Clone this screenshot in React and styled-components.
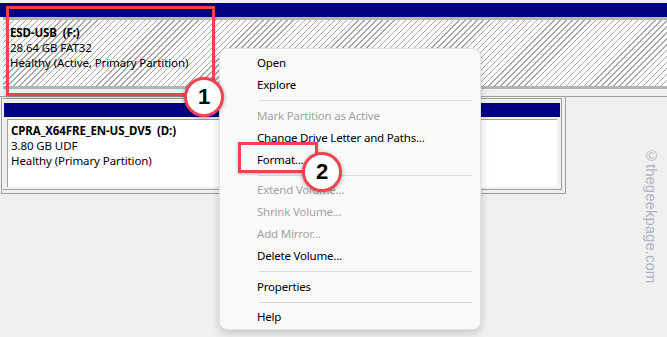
import styled, { createGlobalStyle } from "styled-components";

const GlobalStyle = createGlobalStyle`
  html, body {
    margin: 0;
    padding: 0;
    background: #f0f0f0;
  }
  body {
    font-family: "Noto Sans", "Liberation Sans", sans-serif;
    font-size: 11.5px;
    color: #000;
  }
`;

const Screen = styled.div`
  position: relative;
  width: 667px;
  height: 337px;
  overflow: hidden;
  background: #f0f0f0;
  padding-top: 3px;
  box-sizing: border-box;
  display: flex;
  flex-direction: column;
`;

const TitleBar = styled.div`
  height: 14px;
  flex: none;
  background: #000080;
`;

const HatchedBody = styled.div`
  height: 72px;
  flex: none;
  box-sizing: border-box;
  border-top: 3px solid #b4b4b4;
  border-bottom: 3px solid #b4b4b4;
  margin-left: 3px;
  padding: 5px 7px 0;
  background: repeating-linear-gradient(
    135deg,
    #ffffff 0px,
    #ffffff 3.2px,
    #a8a8a8 3.2px,
    #a8a8a8 4.2px
  );
`;

const RowDivider = styled.div`
  height: 1px;
  flex: none;
  background: #a0a0a0;
  margin-top: 7px;
`;

const DiskFrame = styled.div`
  flex: none;
  border: 1px solid #a0a0a0;
  border-top: none;
  margin-left: 1px;
  width: 565px;
  height: 97px;
  box-sizing: border-box;
  padding: 1px 3px 3px 1px;
`;

const DiskInner = styled.div`
  border: 1px solid #a0a0a0;
  border-left: none;
  height: 100%;
  box-sizing: border-box;
  padding: 4px 1px 2px 1px;
  display: flex;
  flex-direction: column;
`;

const WhiteBody = styled.div`
  flex: 1;
  margin: 2px 3px 0 3px;
  background: #ffffff;
  border-top: 1px solid #a0a0a0;
  border-left: 1px solid #a0a0a0;
  padding: 3px 3px;
`;

const VolName = styled.div`
  font-weight: bold;
  line-height: 15px;
  letter-spacing: -0.1px;
  white-space: pre;
`;

const VolLine = styled.div`
  line-height: 15px;
  letter-spacing: -0.1px;
  white-space: nowrap;
`;

const Menu = styled.div`
  position: absolute;
  left: 219px;
  top: 48px;
  width: 262px;
  height: 282px;
  box-sizing: border-box;
  padding: 3px 0 1px;
  background: #f9f9f9;
  border: 1px solid #e2e2e2;
  border-radius: 8px;
  box-shadow: 0 3px 9px rgba(0, 0, 0, 0.18);
  display: flex;
  flex-direction: column;
`;

const MenuItem = styled.div`
  height: 22px;
  line-height: 22px;
  padding-left: 37px;
  letter-spacing: -0.2px;
  color: ${(p) => (p.$disabled ? "#a3a3a3" : "#000")};
`;

const MenuSep = styled.div`
  height: 1px;
  background: #dcdcdc;
  margin: 4px 8px 4px 39px;
`;

const Highlight = styled.div`
  position: absolute;
  left: ${(p) => p.$x}px;
  top: ${(p) => p.$y}px;
  width: ${(p) => p.$w}px;
  height: ${(p) => p.$h}px;
  border: 3px solid #ee4450;
  box-sizing: border-box;
  box-shadow: 0 1px 3px rgba(0, 0, 0, 0.25);
`;

const Badge = styled.div`
  position: absolute;
  left: ${(p) => p.$x - 20}px;
  top: ${(p) => p.$y - 20}px;
  width: 40px;
  height: 40px;
  box-sizing: border-box;
  border: 3px solid #ee4450;
  border-radius: 50%;
  background: #ffffff;
  box-shadow: 0 1px 4px rgba(0, 0, 0, 0.35);
  display: flex;
  align-items: center;
  justify-content: center;
  font-family: "Liberation Sans", Arial, sans-serif;
  font-weight: bold;
  font-size: 22px;
  color: #000;
`;

const Watermark = styled.div`
  position: absolute;
  left: 643px;
  top: 147px;
  writing-mode: vertical-rl;
  font-family: "Liberation Sans", Arial, sans-serif;
  font-size: 15px;
  color: #b2b2c8;
`;

const items = [
  { label: "Open" },
  { label: "Explore" },
  { sep: true },
  { label: "Mark Partition as Active", disabled: true },
  { label: "Change Drive Letter and Paths..." },
  { label: "Format..." },
  { sep: true },
  { label: "Extend Volume...", disabled: true },
  { label: "Shrink Volume...", disabled: true },
  { label: "Add Mirror...", disabled: true },
  { label: "Delete Volume..." },
  { sep: true },
  { label: "Properties" },
  { sep: true },
  { label: "Help" },
];

export default function App() {
  return (
    <Screen>
      <GlobalStyle />
      <TitleBar />
      <HatchedBody>
        <VolName>{"ESD-USB  (F:)"}</VolName>
        <VolLine>28.64 GB FAT32</VolLine>
        <VolLine>Healthy (Active, Primary Partition)</VolLine>
      </HatchedBody>
      <RowDivider />
      <DiskFrame>
        <DiskInner>
          <TitleBar />
          <WhiteBody>
            <VolName>{"CPRA_X64FRE_EN-US_DV5  (D:)"}</VolName>
            <VolLine>3.80 GB UDF</VolLine>
            <VolLine>Healthy (Primary Partition)</VolLine>
          </WhiteBody>
        </DiskInner>
      </DiskFrame>

      <Menu>
        {items.map((it, i) =>
          it.sep ? (
            <MenuSep key={i} />
          ) : (
            <MenuItem key={i} $disabled={it.disabled}>
              {it.label}
            </MenuItem>
          )
        )}
      </Menu>

      <Highlight $x={6} $y={6} $w={209} $h={90} />
      <Badge $x={204} $y={97}>1</Badge>
      <Highlight $x={238} $y={142} $w={80} $h={31} />
      <Badge $x={322} $y={172}>2</Badge>

      <Watermark>©thegeekpage.com</Watermark>
    </Screen>
  );
}
